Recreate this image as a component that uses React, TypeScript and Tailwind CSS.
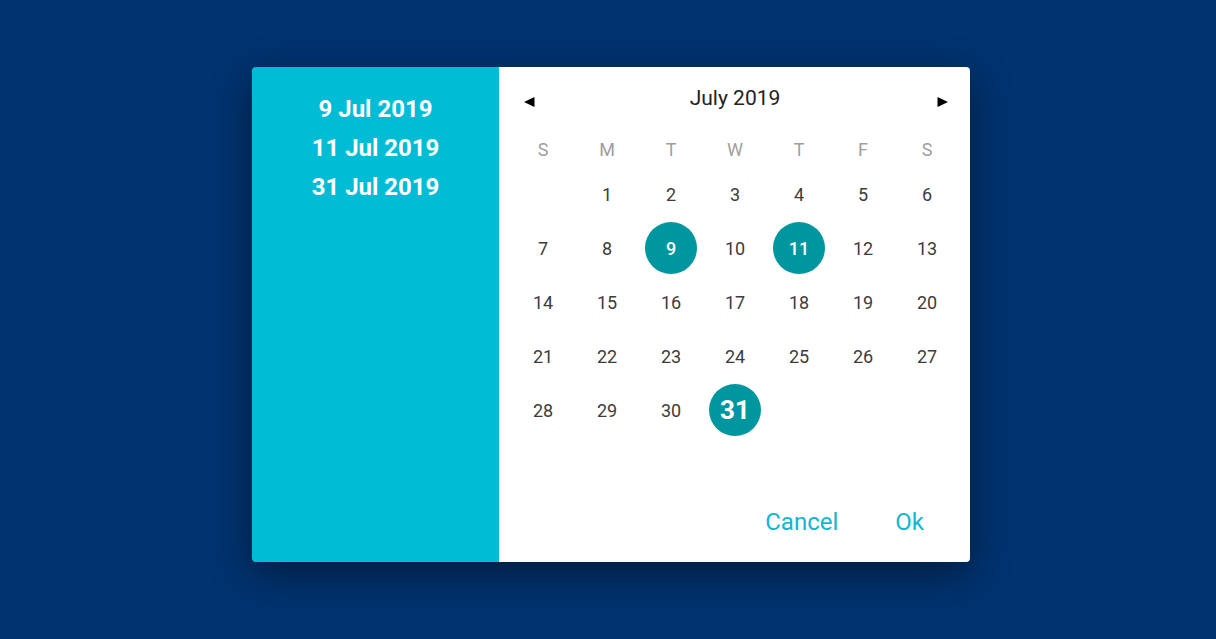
import React from "react";

const weeks: (number | null)[][] = [
  [null, 1, 2, 3, 4, 5, 6],
  [7, 8, 9, 10, 11, 12, 13],
  [14, 15, 16, 17, 18, 19, 20],
  [21, 22, 23, 24, 25, 26, 27],
  [28, 29, 30, 31, null, null, null],
];
const selected = [9, 11, 31];

export default function App() {
  return (
    <div
      className="w-[1216px] h-[639px] bg-[#003370] pt-[67px] pl-[252px]"
      style={{ fontFamily: "Roboto, 'Liberation Sans', sans-serif" }}
    >
      <div className="flex w-[718px] h-[495px] rounded-[4px] overflow-hidden shadow-[0_12px_40px_rgba(0,0,0,0.45)]">
        <div className="w-[247px] shrink-0 bg-[#00bcd4] flex flex-col items-center pt-[23px] text-white font-bold text-[24px] leading-[39px]">
          <div>9 Jul 2019</div>
          <div>11 Jul 2019</div>
          <div>31 Jul 2019</div>
        </div>
        <div className="flex-1 bg-white flex flex-col">
          <div className="grid grid-cols-[1fr_auto_1fr] items-center h-[30px] mt-[16px] pl-[25px] pr-[22px]">
            <svg width="11" height="10" viewBox="0 0 11 10" className="mt-[7px] justify-self-start">
              <path d="M10.5 0 L0 5 L10.5 10 Z" fill="#000" />
            </svg>
            <span className="text-[21px] text-[#222] -ml-[2px]">July 2019</span>
            <svg width="11" height="10" viewBox="0 0 11 10" className="mt-[7px] justify-self-end">
              <path d="M0.5 0 L11 5 L0.5 10 Z" fill="#000" />
            </svg>
          </div>
          <div className="pl-[12px] mt-[18px]">
            <div className="grid grid-cols-[repeat(7,64px)] h-[36px] items-center text-[18px] text-[#9e9e9e]">
              {["S", "M", "T", "W", "T", "F", "S"].map((d, i) => (
                <div key={i} className="text-center">
                  {d}
                </div>
              ))}
            </div>
            {weeks.map((w, wi) => (
              <div key={wi} className="grid grid-cols-[repeat(7,64px)] h-[54px]">
                {w.map((d, di) => (
                  <div key={di} className="flex items-center justify-center">
                    {d !== null &&
                      (selected.includes(d) ? (
                        <div
                          className={`w-[52px] h-[52px] rounded-full bg-[#00969f] text-white flex items-center justify-center ${
                            d === 31 ? "text-[26px] font-bold" : "text-[18px] font-medium"
                          }`}
                        >
                          {d}
                        </div>
                      ) : (
                        <span className="text-[18px] text-[#3c3c3c]">{d}</span>
                      ))}
                  </div>
                ))}
              </div>
            ))}
          </div>
          <div className="mt-auto mb-[22px] flex justify-end items-center h-[36px] pr-[46px] gap-[57px] text-[24px] text-[#12b6cf]">
            <span>Cancel</span>
            <span>Ok</span>
          </div>
        </div>
      </div>
    </div>
  );
}
